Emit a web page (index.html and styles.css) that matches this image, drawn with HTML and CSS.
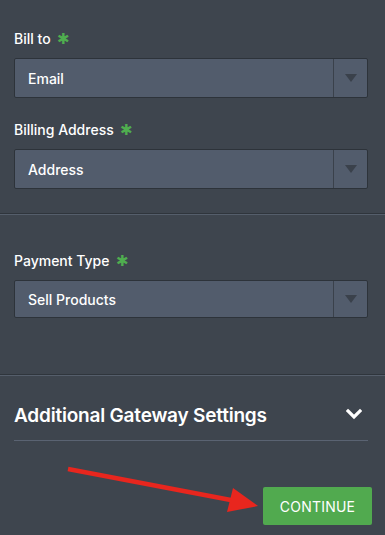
FILE: index.html
```html
<!DOCTYPE html>
<html lang="en">
<head>
  <meta charset="UTF-8">
  <meta name="viewport" content="width=device-width, initial-scale=1.0">
  <title>Payment settings</title>
  <link rel="stylesheet" href="styles.css">
</head>
<body>
  <div id="wrap">
    <div class="section first">
      <div class="field">
        <label class="lbl">Bill to <span class="req">&#10033;</span></label>
        <div class="select">
          <span class="val">Email</span>
          <span class="arrow"></span>
        </div>
      </div>
      <div class="field">
        <label class="lbl">Billing Address <span class="req">&#10033;</span></label>
        <div class="select">
          <span class="val">Address</span>
          <span class="arrow"></span>
        </div>
      </div>
    </div>

    <div class="section second">
      <div class="field">
        <label class="lbl">Payment Type <span class="req">&#10033;</span></label>
        <div class="select short">
          <span class="val">Sell Products</span>
          <span class="arrow"></span>
        </div>
      </div>
    </div>

    <div class="section third">
      <div class="gateway">
        <h2>Additional Gateway Settings</h2>
        <svg class="chev" width="16" height="12" viewBox="0 0 16 12">
          <path d="M2 3 L8 9 L14 3" fill="none" stroke="#fff" stroke-width="3.2" stroke-linecap="square"/>
        </svg>
      </div>
      <div class="btnrow">
        <button class="continue">CONTINUE</button>
      </div>
    </div>

    <!-- annotation arrow -->
    <svg class="pointer" width="385" height="535" viewBox="0 0 385 535">
      <line x1="68" y1="469" x2="236" y2="501" stroke="#e8261e" stroke-width="4.5" stroke-linecap="butt"/>
      <polygon points="258,506 227,512 233,488" fill="#e8261e"/>
    </svg>
  </div>
</body>
</html>
```

FILE: styles.css
```css
*{margin: 0; padding: 0; box-sizing: border-box;}
body{
  width: 100%;
  height: 100vh;
  background: #3e454e;
  font-family: "Inter", "Open Sans", sans-serif;
  color: #fff;
}
#wrap{
  position: relative;
  width: 100%;
  height: 535px;
}
.section{
  padding: 0 17px 0 14px;
}
.first{
  padding-top: 29px;
  padding-bottom: 24px;
}
.second{
  padding-top: 37px;
  padding-bottom: 56px;
  border-top: 1px solid #2f353c;
  box-shadow: inset 0 1px 0 #555e6b;
}
.third{
  padding-top: 24px;
  border-top: 1px solid #2f353c;
  box-shadow: inset 0 1px 0 #555e6b;
}
.field + .field{
  margin-top: 22px;
}
.lbl{
  display: block;
  font-size: 14px;
  font-weight: 500;
  line-height: 20px;
  margin-bottom: 9px;
}
.req{
  color: #4fae4f;
  font-size: 15px;
  margin-left: 3px;
}
.select{
  display: flex;
  height: 40px;
  background: #525c6c;
  border: 1px solid #2d333a;
  border-radius: 2px;
}
.select.short{
  height: 38px;
}
.val{
  flex: 1;
  padding-left: 13px;
  font-size: 14px;
  font-weight: 500;
  display: flex;
  align-items: center;
  border-right: 1px solid #3a414b;
}
.arrow{
  width: 33px;
  display: flex;
  align-items: center;
  justify-content: center;
}
.arrow::after{
  content: "";
  width: 0;
  height: 0;
  border-left: 6px solid transparent;
  border-right: 6px solid transparent;
  border-top: 8px solid #3a414b;
}
.gateway{
  display: flex;
  align-items: center;
  justify-content: space-between;
  height: 42px;
  border-bottom: 1px solid #5a6372;
  padding-right: 6px;
}
.gateway h2{
  font-size: 19px;
  font-weight: 600;
  letter-spacing: -0.2px;
  padding-bottom: 9px;
}
.chev{
  margin-bottom: 12px;
}
.btnrow{
  display: flex;
  justify-content: flex-end;
  margin-top: 46px;
  margin-right: -4px;
}
.continue{
  width: 109px;
  height: 38px;
  background: #51aa4f;
  color: #fff;
  border: 0;
  border-radius: 2px;
  font-family: "Inter", "Open Sans", sans-serif;
  font-size: 14px;
  font-weight: 400;
  letter-spacing: 0.2px;
}
.pointer{
  position: absolute;
  left: 0;
  top: 0;
  pointer-events: none;
}
```
